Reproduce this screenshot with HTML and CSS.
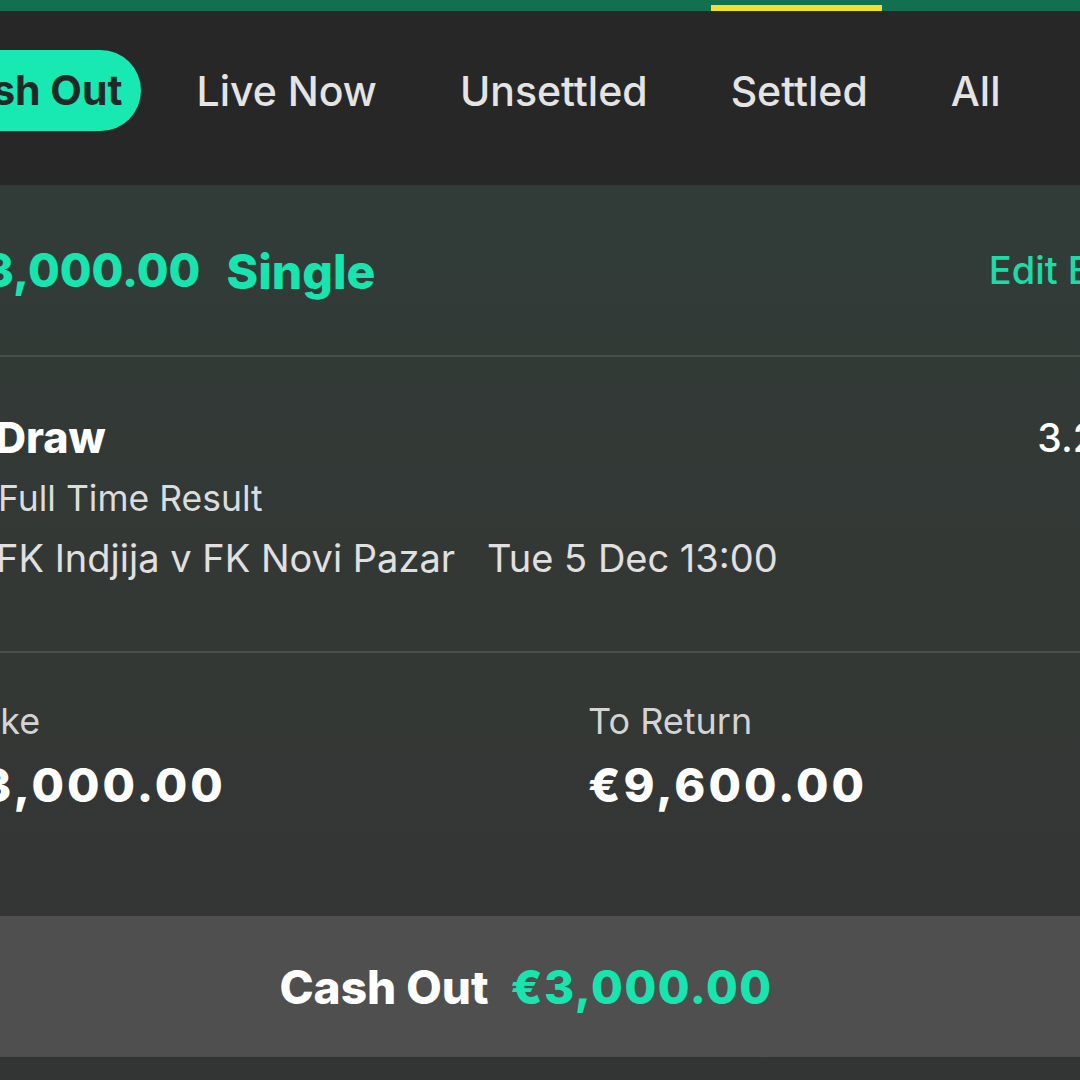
FILE: index.html
```html
<!DOCTYPE html>
<html lang="en">
<head>
<meta charset="utf-8">
<title>My Bets</title>
<link rel="stylesheet" href="styles.css">
</head>
<body>
<div class="screen">
  <div class="topstrip"><span class="topstrip-active"></span></div>
  <nav class="tabs">
    <span class="tab tab-active">Cash Out</span>
    <span class="tab">Live Now</span>
    <span class="tab">Unsettled</span>
    <span class="tab">Settled</span>
    <span class="tab">All</span>
  </nav>
  <section class="bet">
    <div class="bet-head">
      <div class="bet-title"><span class="amt">€3,000.00</span><span class="bet-type">Single</span></div>
      <span class="edit">Edit Bet</span>
    </div>
    <div class="selection">
      <div class="sel-row">
        <span class="sel-name">Draw</span>
        <span class="odds">3.20</span>
      </div>
      <div class="market">Full Time Result</div>
      <div class="fixture"><span>FK Indjija v FK Novi Pazar</span><span class="date">Tue 5 Dec 13:00</span></div>
    </div>
    <div class="totals">
      <div class="total total-stake">
        <span class="total-label">Stake</span>
        <span class="total-value">€3,000.00</span>
      </div>
      <div class="total">
        <span class="total-label">To Return</span>
        <span class="total-value">€9,600.00</span>
      </div>
    </div>
    <div class="cashout-wrap">
      <button class="cashout"><span class="cashout-label">Cash Out</span><span class="cashout-amt">€3,000.00</span></button>
    </div>
  </section>
</div>
</body>
</html>
```

FILE: styles.css
```css
html, body {
  margin: 0;
  padding: 0;
  background: #323533;
  overflow: hidden;
}
body {
  width: 1080px;
  height: 1080px;
  font-family: Inter, "Liberation Sans", sans-serif;
  color: #ffffff;
}
.screen {
  display: flex;
  flex-direction: column;
  height: 1080px;
  overflow: hidden;
}
.topstrip {
  height: 11px;
  background: #127050;
  display: flex;
  align-items: flex-start;
}
.topstrip-active {
  margin-left: 711px;
  margin-top: 5px;
  width: 171px;
  height: 6px;
  background: #f2e12a;
}
.tabs {
  height: 174px;
  background: #272727;
  display: flex;
  align-items: center;
  margin-left: -83px;
  gap: 83px;
  white-space: nowrap;
}
.tab {
  font-size: 41px;
  font-weight: 500;
  color: #e4e4e4;
  margin-top: -15px;
}
.tab-active {
  background: #18e8b2;
  color: #1f2a27;
  font-weight: 700;
  height: 81px;
  line-height: 81px;
  border-radius: 41px;
  padding: 0 19px 0 21px;
  margin-right: -28px;
}
.bet {
  flex: 1;
  display: flex;
  flex-direction: column;
  background: linear-gradient(180deg, #313c38 0%, #333835 40%, #333534 100%);
  margin-left: -48px;
  width: 1178px;
}
.bet-head {
  height: 170px;
  display: flex;
  align-items: center;
  justify-content: space-between;
  border-bottom: 2px solid #4a4e4c;
  padding-right: 2px;
  white-space: nowrap;
}
.bet-title {
  display: flex;
  gap: 26px;
  color: #17e4ae;
  font-weight: 800;
  font-size: 46px;
  margin-top: 2px;
}
.bet-type {
  font-size: 48px;
}
.edit {
  color: #1ddba6;
  font-size: 38px;
  font-weight: 500;
}
.selection {
  height: 296px;
  border-bottom: 2px solid #4a4e4c;
  padding-left: 44px;
  padding-right: 0;
  display: flex;
  flex-direction: column;
  box-sizing: border-box;
  padding-top: 58px;
  white-space: nowrap;
}
.sel-row {
  display: flex;
  justify-content: space-between;
  align-items: center;
  height: 44px;
}
.sel-name {
  font-size: 43px;
  font-weight: 800;
  margin-left: -1px;
}
.odds {
  font-size: 39px;
  font-weight: 500;
  margin-right: 8px;
}
.market {
  font-size: 35.5px;
  color: #dcdcdc;
  margin-top: 18px;
  line-height: 44px;
  padding-left: 2px;
}
.fixture {
  font-size: 38px;
  color: #e0e0e0;
  margin-top: 15px;
  line-height: 44px;
  display: flex;
  gap: 32px;
}
.totals {
  height: 265px;
  display: grid;
  grid-template-columns: 636px 1fr;
  align-content: start;
  padding-top: 46px;
  box-sizing: border-box;
}
.total {
  display: flex;
  flex-direction: column;
  white-space: nowrap;
}
.total-stake {
  margin-left: -7px;
}
.total-label {
  font-size: 36px;
  color: #d4d4d4;
  line-height: 44px;
}
.total-value {
  font-size: 47px;
  font-weight: 800;
  letter-spacing: 3px;
  line-height: 60px;
  margin-top: 12px;
}
.cashout-wrap {
  margin-left: 48px;
  width: 1080px;
}
.cashout {
  width: 1080px;
  height: 141px;
  border: 0;
  background: #4f4f4f;
  display: flex;
  align-items: center;
  justify-content: center;
  gap: 22px;
  font-family: Inter, "Liberation Sans", sans-serif;
  font-size: 46px;
  font-weight: 800;
  padding: 0 28px 0 0;
  margin-top: -2px;
}
.cashout-label {
  color: #ffffff;
}
.cashout-amt {
  color: #17e4ae;
  letter-spacing: 1.5px;
}
```
